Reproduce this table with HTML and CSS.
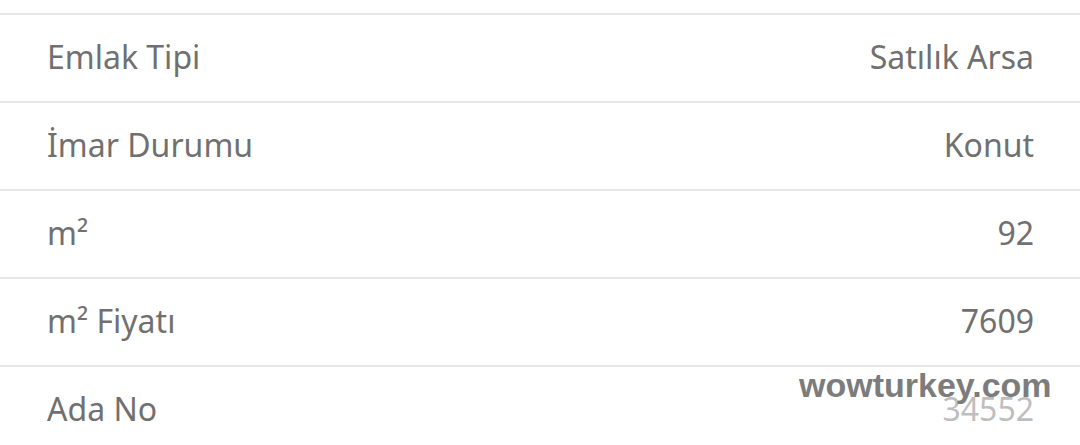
FILE: index.html
```html
<!DOCTYPE html>
<html lang="tr">
<head>
<meta charset="utf-8">
<link rel="stylesheet" href="styles.css">
</head>
<body>
<div class="list">
  <div class="row"><span class="label">Emlak Tipi</span><span class="value">Satılık Arsa</span></div>
  <div class="row"><span class="label">İmar Durumu</span><span class="value">Konut</span></div>
  <div class="row"><span class="label">m²</span><span class="value">92</span></div>
  <div class="row"><span class="label">m² Fiyatı</span><span class="value">7609</span></div>
  <div class="row last"><span class="label">Ada No</span><span class="value">34552</span></div>
</div>
<div class="watermark">wowturkey.com</div>
</body>
</html>
```

FILE: styles.css
```css
html, body {
  margin: 0;
  padding: 0;
  background: #ffffff;
  overflow: hidden;
}
body {
  width: 1080px;
  height: 445px;
  position: relative;
  font-family: "Noto Sans", "Open Sans", sans-serif;
}
.list {
  padding-top: 13px;
}
.row {
  height: 86px;
  box-sizing: content-box;
  border-top: 2px solid #e6e6e6;
  display: flex;
  align-items: center;
  justify-content: space-between;
  padding: 0 46px 0 47px;
  font-size: 32px;
  color: #707070;
}
.row span {
  position: relative;
  top: -2px;
}
.watermark {
  position: absolute;
  left: 795px;
  top: 367px;
  width: 265px;
  height: 58px;
  background: rgba(255, 255, 255, 0.55);
  font-family: "Liberation Sans", Arial, sans-serif;
  font-weight: bold;
  font-size: 34px;
  color: #7c7c7c;
  padding-left: 4px;
  box-sizing: border-box;
  line-height: 36px;
}
```
